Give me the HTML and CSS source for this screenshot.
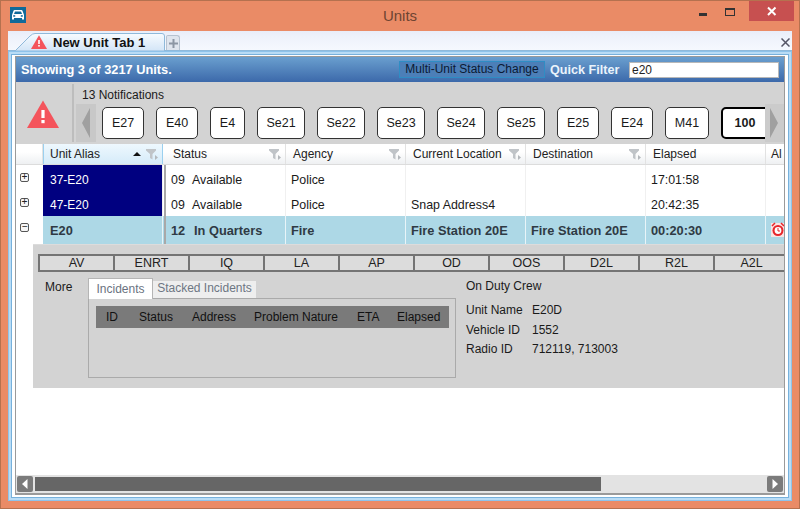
FILE: index.html
```html
<!DOCTYPE html>
<html lang="en">
<head>
<meta charset="utf-8">
<title>Units</title>
<link rel="stylesheet" href="styles.css">
</head>
<body>
<svg class="defs" width="0" height="0">
  <defs><linearGradient id="tabfill" x1="0" y1="0" x2="0" y2="1"><stop offset="0" stop-color="#f7fbff"/><stop offset="1" stop-color="#d3e5f7"/></linearGradient></defs>
  <symbol id="filter" viewBox="0 0 13 11"><path d="M0 0h10v1.500L6.500 5v5.500L4 9V5L0 1.500z" fill="#c0c4c8"/><path d="M9 6l3 2.500L9 11z" fill="#b4b8bc"/></symbol>
  <symbol id="warn" viewBox="0 0 32 28"><path d="M16 0.500L32 28H0z" fill="#f4545c"/><rect x="14.400" y="10" width="3.200" height="8" fill="#fff"/><rect x="14.400" y="20" width="3.200" height="3.200" fill="#fff"/></symbol>
</svg>
<div class="window">
  <header class="titlebar">
    <div class="appicon"><svg width="16" height="16" viewBox="0 0 16 16"><rect width="16" height="16" fill="#0f6a9a"/><path d="M2 8l1.500-4.200q.3-.8 1.200-.8h6.600q.9 0 1.200.8L14 8v4.500h-2V11H4v1.500H2z" fill="#fff"/><path d="M4 7l1-2.600h6L12 7z" fill="#0f6a9a"/><rect x="3.200" y="8.200" width="2" height="1.500" fill="#0f6a9a"/><rect x="10.800" y="8.200" width="2" height="1.500" fill="#0f6a9a"/></svg></div>
    <div class="wintitle">Units</div>
    <div class="winctl">
      <span class="minbtn"></span>
      <span class="maxbtn"></span>
      <span class="closebtn"><svg width="10" height="10" viewBox="0 0 10 10"><path d="M1 1.500L8.500 9M8.500 1.500L1 9" stroke="#fff" stroke-width="2"/></svg></span>
    </div>
  </header>
  <div class="client">
    <div class="tabstrip">
      <div class="tab">
        <svg class="tabshape" width="150" height="18" viewBox="0 0 150 18"><path d="M0 18L15 3Q17.500 .5 20 .5H147Q149.500 .5 149.500 3V18z" fill="url(#tabfill)" stroke="#8fb9da"/></svg>
        <svg class="tabwarn" width="16" height="14"><use href="#warn"/></svg><span class="tablabel">New Unit Tab 1</span>
      </div>
      <div class="addtab"><svg width="9" height="9" viewBox="0 0 9 9"><path d="M3.500 0h2v3.500H9v2H5.500V9h-2V5.500H0v-2h3.500z" fill="#8c96a4"/></svg></div>
      <div class="tabclose"><svg width="9" height="9" viewBox="0 0 9 9"><path d="M.5.500l8 8M8.500.500l-8 8" stroke="#556" stroke-width="1.500"/></svg></div>
    </div>
    <div class="tabbody">
      <div class="panel">
        <div class="bluebar">
          <div class="showing">Showing 3 of 3217 Units.</div>
          <div class="multi">Multi-Unit Status Change</div>
          <div class="qf">Quick Filter</div>
          <div class="qfinput">e20</div>
        </div>
        <div class="notif">
          <div class="bigwarn"><svg width="32" height="28"><use href="#warn"/></svg></div>
          <div class="notifmain">
            <div class="notifcount">13 Notifications</div>
            <div class="chiprow">
              <div class="arrowbtn"><svg width="9" height="30" viewBox="0 0 9 30"><path d="M8 0v30L0 15z" fill="#a0a0a0"/></svg></div>
              <div class="chips">
                <div class="chip w42">E27</div><div class="chip w42">E40</div><div class="chip w35">E4</div>
                <div class="chip w48">Se21</div><div class="chip w48">Se22</div><div class="chip w48">Se23</div>
                <div class="chip w48">Se24</div><div class="chip w48">Se25</div><div class="chip w42">E25</div>
                <div class="chip w42">E24</div><div class="chip w44">M41</div><div class="chip w48 active">100</div>
              </div>
              <div class="arrowbtn right"><svg width="9" height="30" viewBox="0 0 9 30"><path d="M0 0v30l8-15z" fill="#a0a0a0"/></svg></div>
            </div>
          </div>
        </div>
        <div class="grid">
          <div class="gridrow head">
            <div class="hc exp"></div>
            <div class="hc sorted"><span>Unit Alias</span><i class="sortup"></i><svg class="fi" width="13" height="11"><use href="#filter"/></svg></div>
            <div class="hc sep"></div>
            <div class="hc"><span>Status</span><svg class="fi" width="13" height="11"><use href="#filter"/></svg></div>
            <div class="hc"><span>Agency</span><svg class="fi" width="13" height="11"><use href="#filter"/></svg></div>
            <div class="hc"><span>Current Location</span><svg class="fi" width="13" height="11"><use href="#filter"/></svg></div>
            <div class="hc"><span>Destination</span><svg class="fi" width="13" height="11"><use href="#filter"/></svg></div>
            <div class="hc"><span>Elapsed</span></div>
            <div class="hc last"><span>Al</span></div>
          </div>
          <div class="gridrow r1">
            <div class="c exp"><b class="pm">+</b></div>
            <div class="c alias">37-E20</div>
            <div class="c sep"></div>
            <div class="c"><span class="code">09</span>Available</div><div class="c">Police</div><div class="c"></div><div class="c"></div><div class="c">17:01:58</div><div class="c last"></div>
          </div>
          <div class="gridrow r2">
            <div class="c exp"><b class="pm">+</b></div>
            <div class="c alias">47-E20</div>
            <div class="c sep"></div>
            <div class="c"><span class="code">09</span>Available</div><div class="c">Police</div><div class="c">Snap Address4</div><div class="c"></div><div class="c">20:42:35</div><div class="c last"></div>
          </div>
          <div class="gridrow r3">
            <div class="c exp"><b class="pm">&minus;</b></div>
            <div class="c aliasb">E20</div>
            <div class="c sep"></div>
            <div class="c"><span class="code">12</span>In Quarters</div><div class="c">Fire</div><div class="c">Fire Station 20E</div><div class="c">Fire Station 20E</div><div class="c">00:20:30</div>
            <div class="c last"><svg class="alarm" width="14" height="16" viewBox="0 0 14 16"><rect y="1" width="14" height="14" fill="#fbe4e4"/><circle cx="7" cy="8.500" r="5.500" fill="#e8262c"/><circle cx="7" cy="8.500" r="3.400" fill="#fff"/><path d="M7 6v3h2" stroke="#e8262c" fill="none"/><path d="M1 4l3-3M13 4l-3-3" stroke="#e8262c" stroke-width="1.500"/></svg></div>
          </div>
          <div class="detailwrap">
            <div class="detail">
              <div class="statusbtns">
                <div class="sb">AV</div><div class="sb">ENRT</div><div class="sb">IQ</div><div class="sb">LA</div><div class="sb">AP</div><div class="sb">OD</div><div class="sb">OOS</div><div class="sb">D2L</div><div class="sb">R2L</div><div class="sb">A2L</div>
              </div>
              <div class="lower">
                <div class="more">More</div>
                <div class="inc">
                  <div class="inctabs"><div class="it on">Incidents</div><div class="it">Stacked Incidents</div></div>
                  <div class="incbody">
                    <div class="inchead"><span>ID</span><span>Status</span><span>Address</span><span>Problem Nature</span><span>ETA</span><span>Elapsed</span></div>
                  </div>
                </div>
                <div class="crew">
                  <div class="crewtitle">On Duty Crew</div>
                  <dl class="crewlist">
                    <dt>Unit Name</dt><dd>E20D</dd>
                    <dt>Vehicle ID</dt><dd>1552</dd>
                    <dt>Radio ID</dt><dd>712119, 713003</dd>
                  </dl>
                </div>
              </div>
            </div>
          </div>
        </div>
        <div class="hscroll">
          <div class="sbtn"><svg width="6" height="10" viewBox="0 0 6 10"><path d="M5.500 0v10L0 5z" fill="#fff"/></svg></div>
          <div class="track"><div class="thumb"></div></div>
          <div class="sbtn"><svg width="6" height="10" viewBox="0 0 6 10"><path d="M.5 0v10L6 5z" fill="#fff"/></svg></div>
        </div>
      </div>
    </div>
  </div>
</div>
</body>
</html>
```
FILE: styles.css
```css
* { box-sizing: border-box; }
html, body { margin: 0; height: 100%; overflow: hidden; }
body { font: 12px "Liberation Sans", Arial, sans-serif; color: #1a1a1a; }
.defs { position: absolute; }
.window { width: 800px; height: 509px; background: #ea8b66; border: 1px solid #b5714f; display: flex; flex-direction: column; padding: 0 7px 7px; }
.titlebar { height: 30px; flex: none; display: flex; position: relative; margin: 0 -7px; }
.appicon { margin: 6px 0 0 9px; height: 16px; }
.wintitle { position: absolute; left: 0; right: 0; top: 6px; text-align: center; font-size: 15px; color: #6e4432; }
.winctl { margin-left: auto; display: flex; margin-right: 5px; height: 20px; }
.minbtn { width: 8px; height: 3px; background: #333; margin: 12px 18px 0 0; }
.maxbtn { width: 10px; height: 8px; border: 1px solid #333; border-top-width: 2px; margin: 7px 14px 0 0; }
.closebtn { width: 45px; background: #c75050; display: flex; align-items: center; justify-content: center; }
.client { flex: 1; display: flex; flex-direction: column; background: #f2f6fd; min-height: 0; }
.tabstrip { height: 19px; flex: none; display: flex; align-items: flex-end; background: linear-gradient(#e9edf9, #eef2fb 30%, #f5f8fe); position: relative; padding-left: 7px; }
.tab { width: 150px; height: 18px; margin-bottom: -1px; position: relative; z-index: 1; display: flex; align-items: center; padding-left: 16px; font-weight: bold; font-size: 13px; color: #111; }
.tabshape { position: absolute; left: 0; top: 0; }
.tabwarn { position: relative; margin-right: 6px; }
.tablabel { position: relative; }
.addtab { width: 14px; height: 15px; margin-left: 1px; border: 1px solid #b6c2d0; border-bottom: 0; border-radius: 2px 3px 0 0; background: #dfe5ee; display: flex; align-items: center; justify-content: center; }
.tabclose { position: absolute; right: 2px; top: 5px; height: 9px; }
.tabbody { flex: 1; min-height: 0; border-top: 1px solid #8fb9da; padding: 5px 7px 6px; background: #fff; box-shadow: inset 0 0 0 1px #8ec3ea, inset 0 0 0 3px #b9dcf5, inset 0 0 0 4px #77b1dc; display: flex; }
.panel { flex: 1; border: 1px solid #9a9a9a; display: flex; flex-direction: column; min-width: 0; background: #fff; }
.bluebar { height: 25px; flex: none; background: linear-gradient(#6a9fcf, #3c69aa); display: flex; align-items: center; padding-left: 5px; color: #fff; font-weight: bold; }
.showing { font-size: 12.800px; width: 378px; }
.multi { height: 17px; width: 146px; border: 1px solid #2f8dc4; background: #4c7fb8; color: #0b1a33; font-weight: normal; text-align: center; line-height: 15px; font-size: 12px; }
.qf { margin-left: 5px; width: 79px; font-size: 12.600px; color: #eaf3fb; }
.qfinput { width: 150px; height: 16px; background: #fff; border: 1px solid #b8b8b8; color: #222; font-weight: normal; line-height: 14px; padding-left: 2px; }
.notif { height: 62px; flex: none; background: #d3d3d3; display: flex; }
.bigwarn { width: 58px; margin: 2px 0; border-right: 2px solid #bdbdbd; padding: 16px 0 0 11px; }
.notifmain { flex: 1; min-width: 0; padding-left: 2px; }
.notifcount { height: 22px; padding: 6px 0 0 6px; line-height: 14px; }
.chiprow { display: flex; height: 40px; }
.arrowbtn { width: 20px; height: 38px; flex: none; background: #c8c8c8; display: flex; align-items: center; justify-content: center; }
.arrowbtn.right { width: 19px; background: #cbcbcb; }
.chips { width: 663px; flex: none; margin-left: 6px; padding-top: 3px; display: flex; gap: 12px; overflow: hidden; }
.chip { height: 32px; flex: none; background: #fff; border: 1px solid #333; border-radius: 5px; display: flex; align-items: center; justify-content: center; color: #1a1a1a; font-size: 12.500px; }
.w35 { width: 35px; } .w42 { width: 42px; } .w44 { width: 44px; } .w48 { width: 48px; }
.chip.active { border: 2px solid #000; font-weight: bold; width: 48px; }
.grid { flex: 1; min-height: 0; overflow: hidden; }
.gridrow { display: grid; grid-template-columns: 27px 120px 3px repeat(5, 120px) 18px; width: 768px; }
.head { height: 21px; border-bottom: 1px solid #dcdcdc; }
.hc { background: linear-gradient(#fff 40%, #eef0f2); border-right: 1px solid #e2e2e2; display: flex; align-items: center; padding-left: 7px; position: relative; white-space: nowrap; overflow: hidden; color: #222; }
.hc.exp { padding: 0; }
.hc.sep { padding: 0; border: 0; }
.hc.last { border: 0; padding-left: 5px; }
.hc.sorted { background: linear-gradient(#eef8fe, #d5ebf9); border: 1px solid #9bd0ef; border-width: 0 1px; padding-left: 6px; }
.fi { position: absolute; right: 3px; top: 5px; }
.sortup { position: absolute; right: 21px; top: 8px; border: 4px solid transparent; border-top: 0; border-bottom: 4px solid #111; }
.c { display: flex; align-items: center; padding: 2px 0 0 5px; white-space: nowrap; overflow: hidden; background: #fff; border-right: 1px solid #f0f0f0; font-size: 12.400px; }
.r1 .c { padding-top: 3px; }
.code { width: 21px; flex: none; }
.c.exp { align-items: flex-start; padding: 7px 0 0; border: 0; }
.r1 .c.exp { padding-top: 8px; }
.c.sep { padding: 0; border: 0; background: linear-gradient(90deg, #fff 0.5px, #a8a8a8 0.5px, #a8a8a8 2.500px, #fff 2.500px); }
.r1 .c.sep { padding: 0; }
.c.last { padding: 2px 0 0; border: 0; }
.r2 { height: 25px; }
.r1 { height: 26px; }
.c.alias { background: #000080; color: #fff; padding-left: 7px; font-size: 12px; }
.pm { width: 9px; height: 9px; margin-left: 4px; border: 1px solid #555; border-radius: 2px; font: 10px/7px "Liberation Mono", monospace; text-align: center; color: #222; background: #f6f6f6; }
.r3 { height: 28px; color: #2f3a44; }
.r3 .c { padding-top: 0; background: #add8e6; border-right-color: #e8f4f8; font-weight: bold; font-size: 12.800px; }
.r3 .code { width: 23px; }
.r3 .c.exp { padding-top: 7px; background: #fff; }
.r3 .c.sep { background: linear-gradient(90deg, #add8e6 0.5px, #a8a8a8 0.5px, #a8a8a8 2.500px, #fff 2.500px); }
.c.aliasb { padding-left: 7px; }
.alarm { margin-left: 5px; flex: none; }
.detailwrap { padding-left: 17px; }
.detail { width: 751px; height: 144px; background: #d3d3d3; border-top: 1px solid #dcdcdc; overflow: hidden; padding: 9px 0 0 5px; }
.statusbtns { display: flex; width: 746px; overflow: hidden; }
.sb { width: 75px; height: 18px; flex: none; background: #dcdcdc; border: 2px solid #747474; border-width: 2px 0 2px 2px; text-align: center; line-height: 15px; font-size: 12.500px; color: #222; }
.lower { display: flex; padding-top: 6px; }
.more { width: 50px; padding: 2px 0 0 7px; line-height: 14px; }
.inc { width: 368px; }
.inctabs { display: flex; align-items: flex-end; height: 20px; }
.it { height: 17px; width: 103px; background: #eee; color: #6d7683; text-align: center; line-height: 15px; }
.it.on { height: 21px; width: 65px; margin-bottom: -1px; position: relative; background: #fff; border: 1px solid #b5b5b5; border-bottom: 0; line-height: 20px; color: #6a7280; }
.incbody { height: 80px; border: 1px solid #aaa; padding: 7px; }
.inchead { height: 22px; width: 353px; background: #7a7a7a; display: grid; grid-template-columns: 33px 53px 62px 103px 40px auto; align-items: center; padding-left: 10px; color: #111; }
.crew { padding: 1px 0 0 10px; }
.crewtitle { line-height: 14px; }
.crewlist { margin: 10px 0 0; display: grid; grid-template-columns: 66px auto; row-gap: 5.500px; line-height: 14px; }
.crewlist dd { margin: 0; }
.hscroll { height: 19px; flex: none; background: #e3e3e3; border-bottom: 1px solid #9a9a9a; display: flex; align-items: center; padding: 0 1px; }
.sbtn { width: 16px; height: 16px; flex: none; background: #7b7b7b; border-radius: 2px; display: flex; align-items: center; justify-content: center; }
.track { flex: 1; padding: 0 2px; }
.thumb { width: 566px; height: 14px; background: #666; }
```
